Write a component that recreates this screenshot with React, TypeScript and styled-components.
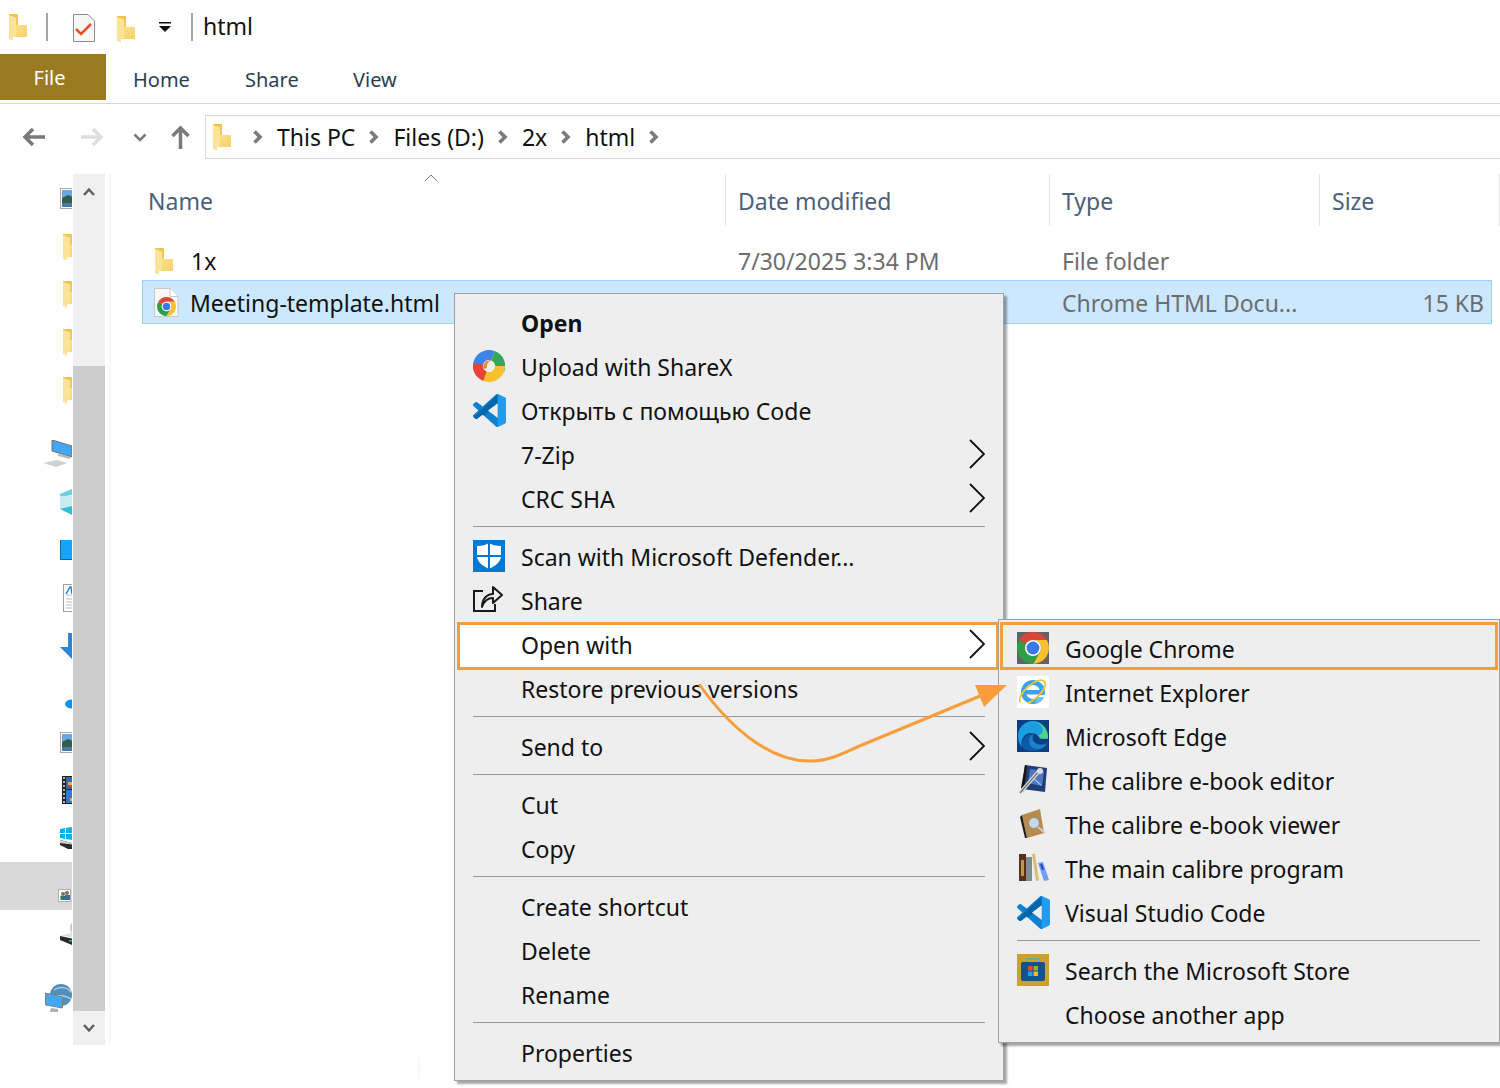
import React from 'react';
import styled, { createGlobalStyle } from 'styled-components';

const GlobalStyle = createGlobalStyle`
  html, body {
    margin: 0;
    padding: 0;
    background: #ffffff;
  }
  body {
    font-family: "Noto Sans", "Open Sans", "Liberation Sans", sans-serif;
  }
`;

const FolderIcon: React.FC = () => (
  <svg width="18" height="27" viewBox="0 0 18 27">
    <defs>
      <linearGradient id="folderBack" x1="0" y1="0" x2="0" y2="1">
        <stop offset="0" stopColor="#f2c04f" />
        <stop offset="1" stopColor="#f7d477" />
      </linearGradient>
      <linearGradient id="folderFront" x1="0" y1="0" x2="1" y2="1">
        <stop offset="0" stopColor="#fbe08c" />
        <stop offset="1" stopColor="#f8d26c" />
      </linearGradient>
    </defs>
    <path d="M0 0h8.500l.5 1v10h9v12H4z" fill="url(#folderBack)" />
    <path d="M7 11h11v12H4z" fill="url(#folderFront)" />
    <path d="M0 1l7 2.500V22l-3 1v3.500L0 25z" fill="#fce39a" />
  </svg>
);

const ChromeRings: React.FC = () => (
  <>
    <path d="M24 4A20 20 0 0 1 41.320 14H24A10 10 0 0 0 15.340 19L6.680 14A20 20 0 0 1 24 4Z" fill="#db4437" />
    <path d="M41.320 14A20 20 0 0 1 24 44L32.660 29A10 10 0 0 0 24 14Z" fill="#fbc02d" />
    <path d="M24 44A20 20 0 0 1 6.680 14L15.340 19A10 10 0 0 0 32.660 29Z" fill="#2f9e49" />
    <circle cx="24" cy="24" r="10" fill="#ffffff" />
    <circle cx="24" cy="24" r="8" fill="#3b78e7" />
  </>
);

const ChromeTile: React.FC = () => (
  <svg width="32" height="32" viewBox="0 0 32 32">
    <rect width="32" height="32" fill="#5f6266" />
    <svg width="32" height="32" viewBox="4 4 40 40">
      <ChromeRings />
    </svg>
  </svg>
);

const HtmlFileIcon: React.FC = () => (
  <svg width="26" height="30" viewBox="0 0 26 30">
    <path d="M1.500.500H17l8 8V28.500H1.500z" fill="#f8f8f8" stroke="#c8c8c8" />
    <path d="M17 .500V8.500h8" fill="#ffffff" stroke="#c8c8c8" />
    <svg x="4" y="9" width="19" height="19" viewBox="4 4 40 40">
      <ChromeRings />
    </svg>
  </svg>
);

const ShareXIcon: React.FC = () => (
  <svg width="32" height="32" viewBox="0 0 32 32" fill="none" strokeWidth="10">
    <path d="M5 16A11 11 0 0 1 20 5.800" stroke="#3f82e8" />
    <path d="M20 5.800A11 11 0 0 1 26.500 20" stroke="#34a853" />
    <path d="M27 16A11 11 0 0 1 12 26.200" stroke="#fbc02d" />
    <path d="M12 26.200A11 11 0 0 1 5 14" stroke="#ea4335" />
    <circle cx="16" cy="16" r="5.500" fill="#eeeeee" stroke="none" />
    <path d="M10.500 19c-1.500-5 3-10 9-8.500-4 .5-6 3-5.500 7.500z" fill="#f28b30" stroke="none" />
  </svg>
);

const VsCodeIcon: React.FC = () => (
  <svg width="33" height="33" viewBox="0 0 24 24">
    <defs>
      <clipPath id="vscodeShape">
        <path d="M23.150 2.587L18.210.21a1.494 1.494 0 0 0-1.705.29l-9.460 8.630-4.120-3.128a.999.999 0 0 0-1.276.057L.327 7.261A1 1 0 0 0 .326 8.740L3.899 12 .326 15.260a1 1 0 0 0 .001 1.479L1.650 17.940a.999.999 0 0 0 1.276.057l4.120-3.128 9.460 8.630a1.492 1.492 0 0 0 1.704.29l4.942-2.377A1.500 1.500 0 0 0 24 20.060V3.939a1.500 1.500 0 0 0-.85-1.352zm-5.146 14.861L10.826 12l7.178-5.448v10.896z" clipRule="evenodd" />
      </clipPath>
    </defs>
    <g clipPath="url(#vscodeShape)">
      <rect width="24" height="24" fill="#0d80d2" />
      <path d="M0 17L18 0v7L4 19z" fill="#0067ad" />
      <rect x="18" width="6" height="24" fill="#1f9cf0" />
    </g>
  </svg>
);

const DefenderIcon: React.FC = () => (
  <svg width="32" height="32" viewBox="0 0 32 32">
    <rect width="32" height="32" fill="#0078d4" />
    <path d="M16 3c3 2 7 3 12 3v10c0 6-6 10-12 13-6-3-12-7-12-13V6c5 0 9-1 12-3z" fill="#ffffff" />
    <rect x="15" y="2" width="2" height="28" fill="#0078d4" />
    <rect x="3" y="15" width="26" height="2" fill="#0078d4" />
  </svg>
);

const ShareIcon: React.FC = () => (
  <svg width="31" height="30" viewBox="0 0 31 30" fill="none" stroke="#1a1a1a" strokeWidth="2">
    <path d="M10 6H1v20h21v-7" />
    <path d="M9 22C9 14 14 9 20 9V2l9 8-9 8v-5c-5 0-9 3-11 9z" strokeLinejoin="round" />
  </svg>
);

const IeIcon: React.FC = () => (
  <svg width="32" height="32" viewBox="0 0 32 32">
    <rect width="32" height="32" fill="#ffffff" />
    <circle cx="16" cy="16" r="9.500" fill="#ffffff" stroke="#38a4ea" strokeWidth="5" />
    <rect x="8" y="14" width="16" height="4.500" fill="#38a4ea" />
    <rect x="20" y="19" width="10" height="5" fill="#ffffff" />
    <path d="M20 21h7c-1 4-6 7-11 7 3-1 3-4 4-7z" fill="#6cc3f4" />
    <ellipse cx="15.500" cy="16" rx="16" ry="7" transform="rotate(-42 15.500 16)" fill="none" stroke="#f4c430" strokeWidth="1.800" strokeDasharray="30 8 40 4" />
  </svg>
);

const EdgeIcon: React.FC = () => (
  <svg width="32" height="32" viewBox="0 0 32 32">
    <rect width="32" height="32" fill="#0e3f80" />
    <path d="M16 1C7 1 1 8 1 16c0 4 1 8 4 11-2-7 2-14 9-14 5 0 8 3 9 6h8c0-10-6-18-15-18z" fill="#1b9de2" />
    <path d="M31 16c0-7-6-13-12-14 6 3 9 8 5 12-2 2-4 0-4 0 2 4 7 6 11 4z" fill="#4fd389" />
    <path d="M5 27c3 3 7 4 11 4 8 0 13-5 15-9-5 3-10 3-13 1-3-3-3-7-1-9-6-1-13 4-12 13z" fill="#0d5ba8" />
    <path d="M12 21c0 5 4 8 9 8 3 0 6-1 9-5-5 2-10 1-13-2-2-2-2-6 0-8-3 1-5 4-5 7z" fill="#1b7fc9" />
  </svg>
);

const CalibreEditIcon: React.FC = () => (
  <svg width="32" height="32" viewBox="0 0 32 32">
    <path d="M8 1l22 3-2 24L5 25z" fill="#1f3f78" />
    <path d="M8 1L4 24l3 4 3-26z" fill="#161616" />
    <path d="M13 5l14 2-2 15-14-3z" fill="#4f78bd" />
    <path d="M16 14l8 7" stroke="#9dbbe8" strokeWidth="1.500" />
    <path d="M22 7L3 29" stroke="#e2e2e2" strokeWidth="3.500" />
    <path d="M22 7L3 29" stroke="#6f6f6f" strokeWidth="1.200" />
    <circle cx="23" cy="7" r="3" fill="#dddddd" />
  </svg>
);

const CalibreViewIcon: React.FC = () => (
  <svg width="32" height="32" viewBox="0 0 32 32">
    <path d="M5 7l18-6 4 24-17 5z" fill="#b88a4d" />
    <path d="M5 7l5 23-2 0L3 9z" fill="#1c1c1c" />
    <circle cx="17" cy="15" r="5.500" fill="#c9d8e6" stroke="#8a8a8a" />
    <path d="M21 19l7 6" stroke="#cccccc" strokeWidth="2" />
  </svg>
);

const CalibreMainIcon: React.FC = () => (
  <svg width="32" height="30" viewBox="0 0 32 30">
    <rect x="2" y="1" width="7" height="27" fill="#5b2d1c" />
    <rect x="4" y="7" width="3" height="16" fill="#b89a4c" />
    <rect x="9" y="4" width="6" height="24" fill="#7d8f91" />
    <path d="M15 1l3-.500 4 27-3 .500z" fill="#d6bf76" />
    <path d="M21 10l5-1 6 18-5 1z" fill="#6f9ff2" />
    <path d="M23 11l2-.500 2 6-2 .500z" fill="#2446c9" />
  </svg>
);

const StoreIcon: React.FC = () => (
  <svg width="32" height="32" viewBox="0 0 32 32">
    <rect width="32" height="32" fill="#c9a227" />
    <rect x="4" y="8" width="24" height="19" rx="2" fill="#16508f" />
    <path d="M10 8V5h12v3" fill="none" stroke="#3fb4d8" strokeWidth="1.500" />
    <rect x="11" y="12" width="4.500" height="4.500" fill="#e8502a" />
    <rect x="16.500" y="12" width="4.500" height="4.500" fill="#7fba2a" />
    <rect x="11" y="17.500" width="4.500" height="4.500" fill="#1fa4ea" />
    <rect x="16.500" y="17.500" width="4.500" height="4.500" fill="#fbb81a" />
  </svg>
);

const SubArrow: React.FC = () => (
  <ArrowSlot>
    <svg width="16" height="30" viewBox="0 0 16 30" fill="none" stroke="#111111" strokeWidth="1.800">
      <path d="M1 1l14 14L1 29" />
    </svg>
  </ArrowSlot>
);

const CrumbChevron: React.FC = () => (
  <svg width="10" height="14" viewBox="0 0 10 14" fill="none" stroke="#7b7b7b" strokeWidth="3.600">
    <path d="M1.500 1.500L7 7l-5.500 5.500" />
  </svg>
);

const NavIcons: Record<string, React.ReactNode> = {
  picture: (
    <svg width="24" height="21" viewBox="0 0 24 21">
      <rect x=".500" y=".500" width="23" height="20" fill="#ffffff" stroke="#a8a8a8" />
      <rect x="2" y="2" width="20" height="17" fill="#6aa6ea" />
      <path d="M2 10l6-3 14 5v7H2z" fill="#30604a" />
      <rect x="2" y="15" width="20" height="4" fill="#4a78a8" />
    </svg>
  ),
  computer: (
    <svg width="40" height="28" viewBox="0 0 40 28">
      <path d="M9 0l20 6v11L9 11z" fill="#42a8f4" stroke="#707070" />
      <path d="M15 13l12 4v2l-12-3z" fill="#b8b8b8" />
      <path d="M0 23l14-3 10 3-11 4z" fill="#cfcfcf" />
    </svg>
  ),
  cube: (
    <svg width="24" height="26" viewBox="0 0 24 26">
      <path d="M0 5l12-5v6L0 8z" fill="#6ad0de" />
      <rect y="7" width="24" height="13" fill="#c5ecf1" />
      <path d="M0 20l12-3v9z" fill="#2fc0d6" />
    </svg>
  ),
  desktop: (
    <svg width="24" height="20" viewBox="0 0 24 20">
      <rect width="24" height="20" fill="#16a4fa" />
      <rect y="19" width="24" height="1" fill="#0668b0" />
      <rect width="1" height="20" fill="#0668b0" />
    </svg>
  ),
  doc: (
    <svg width="20" height="28" viewBox="0 0 20 28">
      <rect x=".500" y=".500" width="19" height="27" fill="#ffffff" stroke="#a0a0a0" />
      <path d="M3 10L7 3h1l1 7" fill="none" stroke="#1c86d8" strokeWidth="1.500" />
      <path d="M3 11h8M3 15h8M3 18h8M3 21h8M3 24h8" stroke="#bcbcbc" />
    </svg>
  ),
  download: (
    <svg width="24" height="26" viewBox="0 0 24 26">
      <path d="M0 14l12 12V14zM8 0h6v14H8z" fill="#2b86d8" />
    </svg>
  ),
  cloud: (
    <svg width="14" height="10" viewBox="0 0 14 10">
      <ellipse cx="7" cy="5" rx="7" ry="4.500" fill="#0a94f2" />
    </svg>
  ),
  film: (
    <svg width="24" height="28" viewBox="0 0 24 28">
      <rect width="24" height="28" fill="#222222" />
      <path d="M2 1v26" stroke="#b8b8b8" strokeWidth="2" strokeDasharray="2 2" />
      <rect x="4" y="1" width="20" height="12" fill="#3068c0" />
      <rect x="4" y="14" width="20" height="13" fill="#2f78d8" />
      <rect x="6" y="6" width="5" height="3" fill="#e8b040" />
      <rect x="6" y="9" width="6" height="2" fill="#d84038" />
      <rect x="8" y="22" width="5" height="3" fill="#e8b040" />
    </svg>
  ),
  windows: (
    <svg width="24" height="22" viewBox="0 0 24 22">
      <path d="M0 2l5-1v5H0zM6 1l6-1v6H6zM0 7h5v5l-5-1zM6 7h6v6l-6-1z" fill="#00b4f4" />
      <path d="M0 13l24 6v3H8l-8-4z" fill="#2a2a2a" />
      <path d="M0 13l24 6-24-3z" fill="#d0d0d0" />
    </svg>
  ),
  users: (
    <svg width="16" height="14" viewBox="0 0 16 14">
      <rect x=".500" y=".500" width="12" height="12" fill="#ffffff" stroke="#b0b0b0" />
      <circle cx="5" cy="5" r="2" fill="#8a6b4c" />
      <rect x="2.500" y="7" width="5" height="4" fill="#2e7d5a" />
      <circle cx="9" cy="4" r="2" fill="#8a6b4c" />
      <rect x="7" y="6" width="5" height="5" fill="#3a6ea8" />
      <rect x="14" y="5" width="2" height="5" fill="#333333" />
    </svg>
  ),
  drive: (
    <svg width="24" height="24" viewBox="0 0 24 24">
      <ellipse cx="14" cy="6" rx="4" ry="6" fill="#c8c8c8" />
      <path d="M0 14l12-3 12 5v2l-12-3z" fill="#e0e0e0" />
      <path d="M0 14l24 5v4l-12 0L0 18z" fill="#2a2a2a" />
      <rect x="9" y="18" width="3" height="1.500" fill="#30c050" />
    </svg>
  ),
  network: (
    <svg width="40" height="28" viewBox="0 0 40 28">
      <circle cx="16" cy="11" r="11" fill="#4f8fb8" />
      <path d="M9 6c6-4 13-3 17 2M8 13c6-2 12-2 18 2" stroke="#a9cfe4" strokeWidth="1.500" fill="none" />
      <path d="M.500 9l17 4v11L.500 21z" fill="#42a8f4" stroke="#808080" />
      <path d="M6 24l7 1v3H5z" fill="#b0b0b0" />
    </svg>
  ),
};

const navRows = [
  { icon: 'picture', x: 60 },
  { icon: 'folder', x: 63, offset: 2 },
  { icon: 'folder', x: 63, offset: 0 },
  { icon: 'folder', x: 63, offset: 0 },
  { icon: 'folder', x: 63, offset: 0, gap: 16 },
  { icon: 'computer', x: 43 },
  { icon: 'cube', x: 60 },
  { icon: 'desktop', x: 60 },
  { icon: 'doc', x: 63 },
  { icon: 'download', x: 60 },
  { icon: 'cloud', x: 65, offset: 20 },
  { icon: 'picture', x: 60 },
  { icon: 'film', x: 62 },
  { icon: 'windows', x: 60 },
  { icon: 'users', x: 58, offset: 20, active: true },
  { icon: 'drive', x: 60, gap: 16 },
  { icon: 'network', x: 45 },
];

const columns = [
  { label: 'Name', width: 615 },
  { label: 'Date modified', width: 324 },
  { label: 'Type', width: 270 },
  { label: 'Size', width: 180 },
];

type MenuEntry = {
  label?: string;
  icon?: React.ReactNode;
  bold?: boolean;
  arrow?: boolean;
  hot?: boolean;
  separator?: boolean;
};

const mainMenu: MenuEntry[] = [
  { label: 'Open', bold: true },
  { label: 'Upload with ShareX', icon: <ShareXIcon /> },
  { label: 'Открыть с помощью Code', icon: <VsCodeIcon /> },
  { label: '7-Zip', arrow: true },
  { label: 'CRC SHA', arrow: true },
  { separator: true },
  { label: 'Scan with Microsoft Defender...', icon: <DefenderIcon /> },
  { label: 'Share', icon: <ShareIcon /> },
  { label: 'Open with', arrow: true, hot: true },
  { label: 'Restore previous versions' },
  { separator: true },
  { label: 'Send to', arrow: true },
  { separator: true },
  { label: 'Cut' },
  { label: 'Copy' },
  { separator: true },
  { label: 'Create shortcut' },
  { label: 'Delete' },
  { label: 'Rename' },
  { separator: true },
  { label: 'Properties' },
];

const subMenu: MenuEntry[] = [
  { label: 'Google Chrome', icon: <ChromeTile />, hot: true },
  { label: 'Internet Explorer', icon: <IeIcon /> },
  { label: 'Microsoft Edge', icon: <EdgeIcon /> },
  { label: 'The calibre e-book editor', icon: <CalibreEditIcon /> },
  { label: 'The calibre e-book viewer', icon: <CalibreViewIcon /> },
  { label: 'The main calibre program', icon: <CalibreMainIcon /> },
  { label: 'Visual Studio Code', icon: <VsCodeIcon /> },
  { separator: true },
  { label: 'Search the Microsoft Store', icon: <StoreIcon /> },
  { label: 'Choose another app' },
];

const App: React.FC = () => {
  return (
    <Page>
      <GlobalStyle />
      <TitleBar>
        <TitleFolder>
          <FolderIcon />
        </TitleFolder>
        <TitleRule />
        <TitleCheck>
          <svg width="22" height="28" viewBox="0 0 22 28">
            <path d="M.500.500H15l6.500 6.500v20.500H.500z" fill="#f7f7f7" stroke="#8c8c8c" />
            <path d="M3 15l5 5 10-10" fill="none" stroke="#e8501c" strokeWidth="2.500" />
          </svg>
        </TitleCheck>
        <TitleFolder2>
          <FolderIcon />
        </TitleFolder2>
        <TitleDrop>
          <svg width="14" height="11" viewBox="0 0 14 11">
            <rect x="1" width="12" height="1.500" fill="#111111" />
            <path d="M1 4h12l-6 6z" fill="#111111" />
          </svg>
        </TitleDrop>
        <TitleRule2 />
        <TitleText>html</TitleText>
      </TitleBar>

      <Ribbon>
        <FileTab>File</FileTab>
        <RibbonTab $width={112}>Home</RibbonTab>
        <RibbonTab $width={108}>Share</RibbonTab>
        <RibbonTab $width={80}>View</RibbonTab>
      </Ribbon>

      <AddressRow>
        <NavSlot $width={58}>
          <svg width="24" height="20" viewBox="0 0 24 20" fill="none" stroke="#7a7a7a" strokeWidth="3.500">
            <path d="M23 10H3M11 2l-8 8 8 8" />
          </svg>
        </NavSlot>
        <NavSlot $width={53}>
          <svg width="24" height="20" viewBox="0 0 24 20" fill="none" stroke="#dedede" strokeWidth="3.500">
            <path d="M1 10h20M13 2l8 8-8 8" />
          </svg>
        </NavSlot>
        <NavSlot $width={38}>
          <svg width="14" height="9" viewBox="0 0 14 9" fill="none" stroke="#7a7a7a" strokeWidth="2.500">
            <path d="M1.500 1.500L7 7l5.500-5.500" />
          </svg>
        </NavSlot>
        <NavSlot $width={34}>
          <svg width="19" height="24" viewBox="0 0 19 24" fill="none" stroke="#7a7a7a" strokeWidth="3.500">
            <path d="M9.500 24V3M1.500 11l8-8 8 8" />
          </svg>
        </NavSlot>
        <AddressBox>
          <FolderIcon />
          <Crumbs>
            <CrumbChevron />
            <CrumbText>This PC</CrumbText>
            <CrumbChevron />
            <CrumbText>Files (D:)</CrumbText>
            <CrumbChevron />
            <CrumbText>2x</CrumbText>
            <CrumbChevron />
            <CrumbText>html</CrumbText>
            <CrumbChevron />
          </Crumbs>
        </AddressBox>
      </AddressRow>

      <Body>
        <NavPane>
          {navRows.map((row, i) => (
            <NavRow key={i} $x={row.x} $offset={row.offset ?? 0} $gap={row.gap ?? 0} $active={!!row.active}>
              {row.icon === 'folder' ? <FolderIcon /> : NavIcons[row.icon]}
            </NavRow>
          ))}
        </NavPane>
        <Scrollbar>
          <ScrollCap $height={34}>
            <svg width="12" height="9" viewBox="0 0 12 9" fill="none" stroke="#606060" strokeWidth="2.500">
              <path d="M1 8l5-5.500L11 8" />
            </svg>
          </ScrollCap>
          <ScrollTrack />
          <ScrollThumb />
          <ScrollCap $height={34}>
            <svg width="12" height="9" viewBox="0 0 12 9" fill="none" stroke="#606060" strokeWidth="2.500">
              <path d="M1 1l5 5.500L11 1" />
            </svg>
          </ScrollCap>
        </Scrollbar>
        <PaneEdge />
        <FileList>
          <SortCaret>
            <svg width="14" height="8" viewBox="0 0 14 8" fill="none" stroke="#7a7a7a" strokeWidth="1">
              <path d="M.500 7.500L7 1l6.500 6.500" />
            </svg>
          </SortCaret>
          <HeaderRow>
            {columns.map((col, i) => (
              <HeaderCell key={col.label} $width={col.width} $first={i === 0}>
                {col.label}
              </HeaderCell>
            ))}
          </HeaderRow>
          <FileRow>
            <NameCell $left={13} $width={584}>
              <FolderIcon />
              <FileName $gap={18}>1x</FileName>
            </NameCell>
            <MetaCell $width={324}>7/30/2025 3:34 PM</MetaCell>
            <MetaCell $width={270}>File folder</MetaCell>
            <MetaCell $width={172} />
          </FileRow>
          <SelectedRow>
            <NameCell $left={10} $width={583}>
              <HtmlFileIcon />
              <FileName $gap={11}>Meeting-template.html</FileName>
            </NameCell>
            <MetaCell $width={324} />
            <MetaCell $width={270}>Chrome HTML Docu...</MetaCell>
            <SizeCell>15 KB</SizeCell>
          </SelectedRow>
        </FileList>
      </Body>

      <StrayEdge />

      <MainMenu>
        {mainMenu.map((item, i) =>
          item.separator ? (
            <MenuRule key={i} $right={18} />
          ) : (
            <MenuItem key={i} $hot={!!item.hot}>
              <IconSlot>{item.icon}</IconSlot>
              <ItemLabel $bold={!!item.bold}>{item.label}</ItemLabel>
              {item.arrow && <SubArrow />}
            </MenuItem>
          ),
        )}
      </MainMenu>

      <OpenWithMenu>
        {subMenu.map((item, i) =>
          item.separator ? (
            <MenuRule key={i} $right={19} />
          ) : (
            <SubItem key={i} $hot={!!item.hot}>
              <IconSlot>{item.icon}</IconSlot>
              <ItemLabel $bold={false}>{item.label}</ItemLabel>
            </SubItem>
          ),
        )}
      </OpenWithMenu>

      <Callout>
        <svg width="320" height="90" viewBox="695 680 320 90">
          <path d="M699 684C735 735 775 762 812 761C830 761 845 752 862 745L985 694" fill="none" stroke="#f79d3c" strokeWidth="3" />
          <path d="M1007 685H975L984 707z" fill="#f79d3c" />
        </svg>
      </Callout>
    </Page>
  );
};

const Page = styled.div`
  position: relative;
  width: 1500px;
  height: 1088px;
  overflow: hidden;
  background: #ffffff;
  color: #111111;
  font-size: 23px;
`;

const TitleBar = styled.div`
  height: 54px;
  display: flex;
  align-items: center;
  padding-left: 9px;
  box-sizing: border-box;
`;

const TitleFolder = styled.div`
  display: flex;
  margin-right: 19px;
`;

const TitleRule = styled.div`
  width: 2px;
  height: 28px;
  background: #a6a6a6;
  margin-right: 25px;
`;

const TitleCheck = styled.div`
  display: flex;
  margin-top: 2px;
  margin-right: 22px;
`;

const TitleFolder2 = styled.div`
  display: flex;
  margin-top: 4px;
  margin-right: 23px;
`;

const TitleDrop = styled.div`
  display: flex;
  margin-right: 19px;
`;

const TitleRule2 = styled.div`
  width: 2px;
  height: 28px;
  background: #a6a6a6;
  margin-right: 10px;
`;

const TitleText = styled.div`
  font-size: 23px;
  padding-bottom: 2px;
  color: #111111;
`;

const Ribbon = styled.div`
  height: 49px;
  display: flex;
  align-items: flex-start;
  border-bottom: 1px solid #d9d9d9;
`;

const FileTab = styled.div`
  width: 106px;
  height: 46px;
  margin-right: 27px;
  background: #9a7b20;
  color: #ffffff;
  font-size: 20px;
  display: flex;
  align-items: center;
  justify-content: center;
  padding-right: 7px;
  box-sizing: border-box;
`;

const RibbonTab = styled.div<{ $width: number }>`
  width: ${(p) => p.$width}px;
  height: 46px;
  line-height: 51px;
  font-size: 20px;
  color: #2d3e52;
`;

const AddressRow = styled.div`
  height: 44px;
  margin-top: 11px;
  margin-bottom: 15px;
  padding-left: 22px;
  display: flex;
  align-items: center;
`;

const NavSlot = styled.div<{ $width: number }>`
  width: ${(p) => p.$width}px;
  display: flex;
  align-items: center;
`;

const AddressBox = styled.div`
  flex: 1;
  height: 44px;
  margin-right: -2px;
  box-sizing: border-box;
  border: 1px solid #d9d9d9;
  padding-left: 7px;
  display: flex;
  align-items: center;
`;

const Crumbs = styled.div`
  display: flex;
  align-items: center;
  gap: 14px;
  margin-left: 22px;
`;

const CrumbText = styled.span`
  font-size: 23px;
  color: #111111;
`;

const Body = styled.div`
  height: 871px;
  display: flex;
`;

const NavPane = styled.div`
  width: 73px;
  flex: none;
  overflow: hidden;
`;

const NavRow = styled.div<{ $x: number; $offset: number; $gap: number; $active: boolean }>`
  width: 72px;
  height: 48px;
  margin-bottom: ${(p) => p.$gap}px;
  padding-left: ${(p) => p.$x}px;
  padding-top: ${(p) => p.$offset}px;
  box-sizing: border-box;
  display: flex;
  align-items: center;
  overflow: hidden;
  background: ${(p) => (p.$active ? '#d9d9d9' : 'transparent')};

  svg {
    flex: none;
  }
`;

const Scrollbar = styled.div`
  width: 32px;
  flex: none;
  display: flex;
  flex-direction: column;
`;

const ScrollCap = styled.div<{ $height: number }>`
  height: ${(p) => p.$height}px;
  background: #f0f0f0;
  display: flex;
  align-items: center;
  justify-content: center;
`;

const ScrollTrack = styled.div`
  height: 158px;
  background: #f0f0f0;
`;

const ScrollThumb = styled.div`
  flex: 1;
  background: #cdcdcd;
`;

const PaneEdge = styled.div`
  width: 2px;
  flex: none;
  margin-left: 4px;
  background: #f8f8f8;
`;

const FileList = styled.div`
  position: relative;
  flex: 1;
`;

const SortCaret = styled.div`
  position: absolute;
  left: 313px;
  top: 0;
  display: flex;
`;

const HeaderRow = styled.div`
  height: 52px;
  display: flex;
`;

const HeaderCell = styled.div<{ $width: number; $first: boolean }>`
  width: ${(p) => p.$width}px;
  box-sizing: border-box;
  padding-left: ${(p) => (p.$first ? 37 : 12)}px;
  line-height: 54px;
  border-right: 1px solid #e5e5e5;
  font-size: 23px;
  color: #4c607a;
`;

const FileRow = styled.div`
  height: 40px;
  width: 1350px;
  margin: 14px 0 0 31px;
  padding-top: 2px;
  box-sizing: border-box;
  display: flex;
  align-items: center;
`;

const SelectedRow = styled(FileRow)`
  height: 44px;
  margin-top: 0;
  padding-top: 2px;
  background: #cce8ff;
  border: 1px solid #99d1ff;
`;

const NameCell = styled.div<{ $left: number; $width: number }>`
  width: ${(p) => p.$width}px;
  flex: none;
  box-sizing: border-box;
  padding-left: ${(p) => p.$left}px;
  display: flex;
  align-items: center;
`;

const FileName = styled.span<{ $gap: number }>`
  margin-left: ${(p) => p.$gap}px;
  font-size: 23px;
  color: #111111;
`;

const MetaCell = styled.div<{ $width: number }>`
  width: ${(p) => p.$width}px;
  flex: none;
  box-sizing: border-box;
  padding-left: 12px;
  font-size: 23px;
  color: #6d6d6d;
`;

const SizeCell = styled.div`
  flex: 1;
  padding-right: 7px;
  text-align: right;
  font-size: 23px;
  color: #6d6d6d;
`;

const StrayEdge = styled.div`
  position: absolute;
  left: 418px;
  top: 1057px;
  width: 2px;
  height: 22px;
  background: #f8f8f8;
`;

const MainMenu = styled.div`
  position: absolute;
  left: 454px;
  top: 293px;
  width: 550px;
  height: 788px;
  box-sizing: border-box;
  padding-top: 6px;
  background: #eeeeee;
  border: 1px solid #a0a0a0;
  box-shadow: 3px 3px 2px rgba(0, 0, 0, 0.35);
`;

const OpenWithMenu = styled(MainMenu)`
  left: 998px;
  top: 619px;
  width: 502px;
  height: 424px;
`;

const MenuItem = styled.div<{ $hot: boolean }>`
  position: relative;
  height: 44px;
  display: flex;
  align-items: center;
  padding: 0 18px;

  > * {
    position: relative;
  }

  ${(p) =>
    p.$hot &&
    `
    &::before {
      content: "";
      position: absolute;
      left: 2px;
      right: 4px;
      top: 0;
      bottom: -4px;
      background: #ffffff;
      border: 3px solid #f79d3c;
    }
  `}
`;

const SubItem = styled.div<{ $hot: boolean }>`
  position: relative;
  height: 44px;
  display: flex;
  align-items: center;
  padding: 0 18px;

  > * {
    position: relative;
  }

  ${(p) =>
    p.$hot &&
    `
    &::before {
      content: "";
      position: absolute;
      left: 1px;
      right: 1px;
      top: -4px;
      bottom: 0;
      border: 3px solid #f79d3c;
    }
  `}
`;

const IconSlot = styled.div`
  width: 48px;
  flex: none;
  display: flex;
  align-items: center;
`;

const ItemLabel = styled.span<{ $bold: boolean }>`
  flex: 1;
  font-size: 23px;
  font-weight: ${(p) => (p.$bold ? 700 : 400)};
  color: #111111;
  white-space: nowrap;
  margin-top: 2px;
`;

const ArrowSlot = styled.div`
  display: flex;
  flex: none;
`;

const MenuRule = styled.div<{ $right: number }>`
  height: 1px;
  margin: 6px ${(p) => p.$right}px 7px 18px;
  background: #999999;
`;

const Callout = styled.div`
  position: absolute;
  left: 695px;
  top: 680px;
  display: flex;
  pointer-events: none;
`;

export default App;
